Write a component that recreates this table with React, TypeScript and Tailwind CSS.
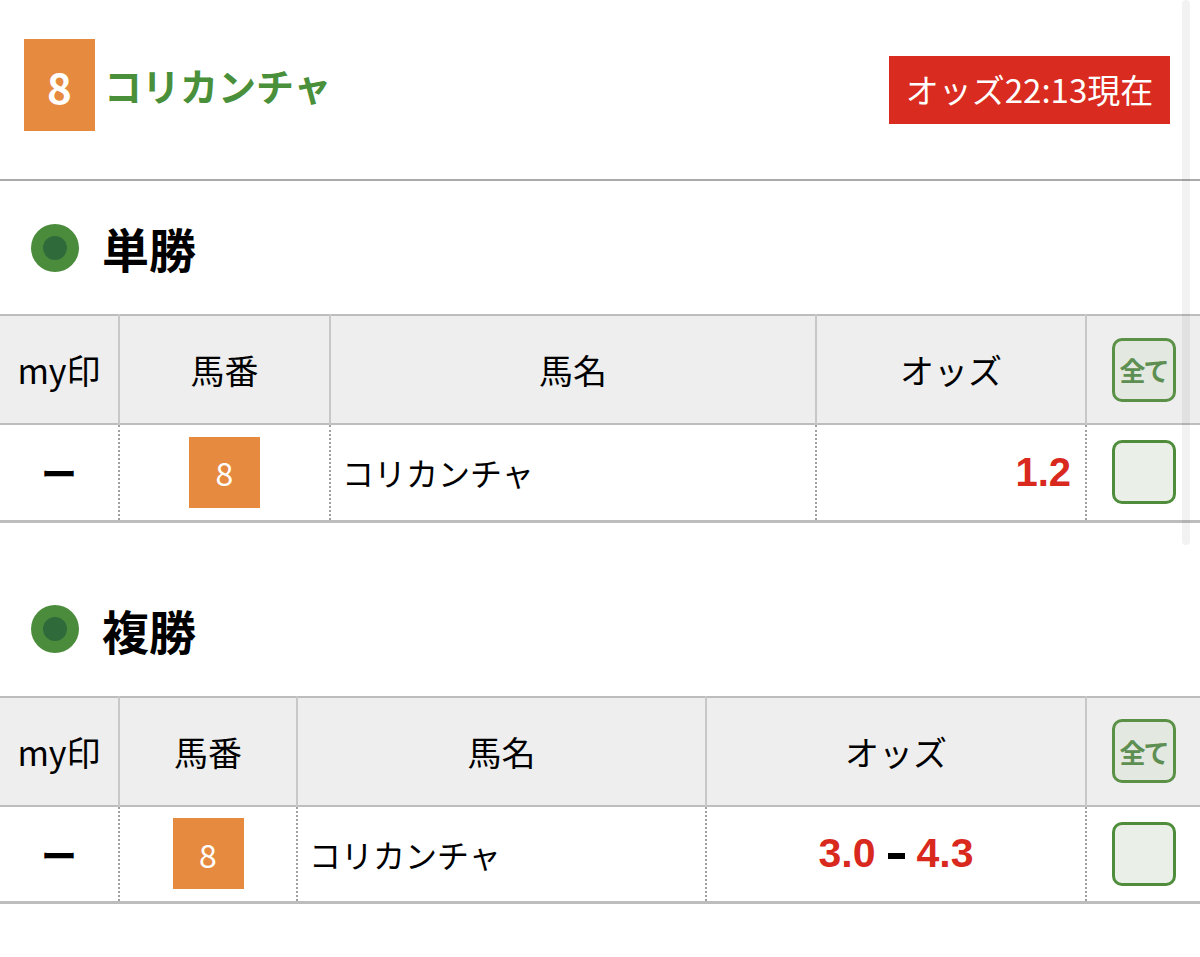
const jp = "font-['Noto_Sans_CJK_JP','Noto_Sans',sans-serif]"

type Col = { label: string; w: number }

function SectionTitle({ title }: { title: string }) {
  return (
    <div className="h-[133px] flex items-center pl-[31px] gap-[23px]">
      <div className="w-[48px] h-[48px] rounded-full bg-[#4b8c3c] flex items-center justify-center">
        <div className="w-[24px] h-[24px] rounded-full bg-[#2f6a3b]" />
      </div>
      <h2 className="text-[47px] font-bold text-black leading-none">{title}</h2>
    </div>
  )
}

function OddsTable({ cols, odds }: { cols: Col[]; odds: React.ReactNode }) {
  return (
    <table className="w-full border-collapse table-fixed">
      <colgroup>
        {cols.map((c, i) => (
          <col key={i} style={{ width: c.w }} />
        ))}
      </colgroup>
      <thead>
        <tr className="h-[109px] bg-[#eeeeee] border-t-2 border-b-2 border-[#bdbdbd]">
          {cols.map((c, i) => (
            <th
              key={i}
              className={`font-normal text-[34px] text-black text-center p-0 ${i > 0 ? "border-l-2 border-[#c8c8c8]" : ""}`}
            >
              {i === cols.length - 1 ? (
                <div className="mx-auto w-[64px] h-[64px] rounded-[10px] border-[3px] border-[#5a9146] bg-[#e3e8e0] flex items-center justify-center text-[26px] font-bold text-[#5e8f52] tracking-[-2px]">
                  全て
                </div>
              ) : (
                c.label
              )}
            </th>
          ))}
        </tr>
      </thead>
      <tbody>
        <tr className="h-[97px] border-b-[3px] border-[#bdbdbd]">
          <td className="text-center p-0">
            <span className="text-[36px] font-bold">ー</span>
          </td>
          <td className="p-0 border-l-2 border-dotted border-[#a0a0a0]">
            <div className="mx-auto w-[71px] h-[71px] bg-[#e68a3f] text-white text-[32px] flex items-center justify-center">
              8
            </div>
          </td>
          <td className="p-0 pl-[11px] border-l-2 border-dotted border-[#a0a0a0] text-[32px] text-black">
            コリカンチャ
          </td>
          <td className="p-0 border-l-2 border-dotted border-[#a0a0a0]">{odds}</td>
          <td className="p-0 border-l-2 border-dotted border-[#a0a0a0]">
            <div className="mx-auto w-[64px] h-[64px] rounded-[10px] border-[3px] border-[#4f8d3c] bg-[#eaf0e8]" />
          </td>
        </tr>
      </tbody>
    </table>
  )
}

export default function App() {
  return (
    <div className={`relative w-[1200px] h-[957px] bg-white overflow-hidden ${jp}`}>
      {/* header */}
      <div className="h-[179px] flex items-start justify-between pl-[24px] pr-[30px] pt-[39px]">
        <div className="flex items-center gap-[9px]">
          <div className="w-[71px] h-[92px] bg-[#e68a3f] text-white text-[42px] font-bold flex items-center justify-center">
            8
          </div>
          <h1 className="text-[38px] font-bold text-[#4a8f3a] leading-none">コリカンチャ</h1>
        </div>
        <div className="mt-[17px] w-[281px] h-[68px] bg-[#d92b1f] text-white text-[33px] flex items-center justify-center">
          オッズ22:13現在
        </div>
      </div>
      <div className="h-[2px] bg-[#aaaaaa]" />

      <SectionTitle title="単勝" />
      <OddsTable
        cols={[
          { label: "my印", w: 119 },
          { label: "馬番", w: 211 },
          { label: "馬名", w: 486 },
          { label: "オッズ", w: 270 },
          { label: "", w: 114 },
        ]}
        odds={
          <div className="text-right pr-[14px] text-[40px] font-bold text-[#d9291e] font-['Liberation_Sans',sans-serif]">
            1.2
          </div>
        }
      />

      <div className="h-[40px]" />
      <SectionTitle title="複勝" />
      <OddsTable
        cols={[
          { label: "my印", w: 119 },
          { label: "馬番", w: 178 },
          { label: "馬名", w: 409 },
          { label: "オッズ", w: 380 },
          { label: "", w: 114 },
        ]}
        odds={
          <div className="flex items-center justify-center text-[41px] font-bold font-['Liberation_Sans',sans-serif]">
            <span className="text-[#d9291e]">3.0</span>
            <span className="mx-[12px] mt-[4px] w-[17px] h-[6px] bg-black" />
            <span className="text-[#d9291e]">4.3</span>
          </div>
        }
      />

      {/* scroll indicator */}
      <div className="absolute right-[10px] top-0 w-[8px] h-[545px] rounded-full bg-black/5" />
    </div>
  )
}
